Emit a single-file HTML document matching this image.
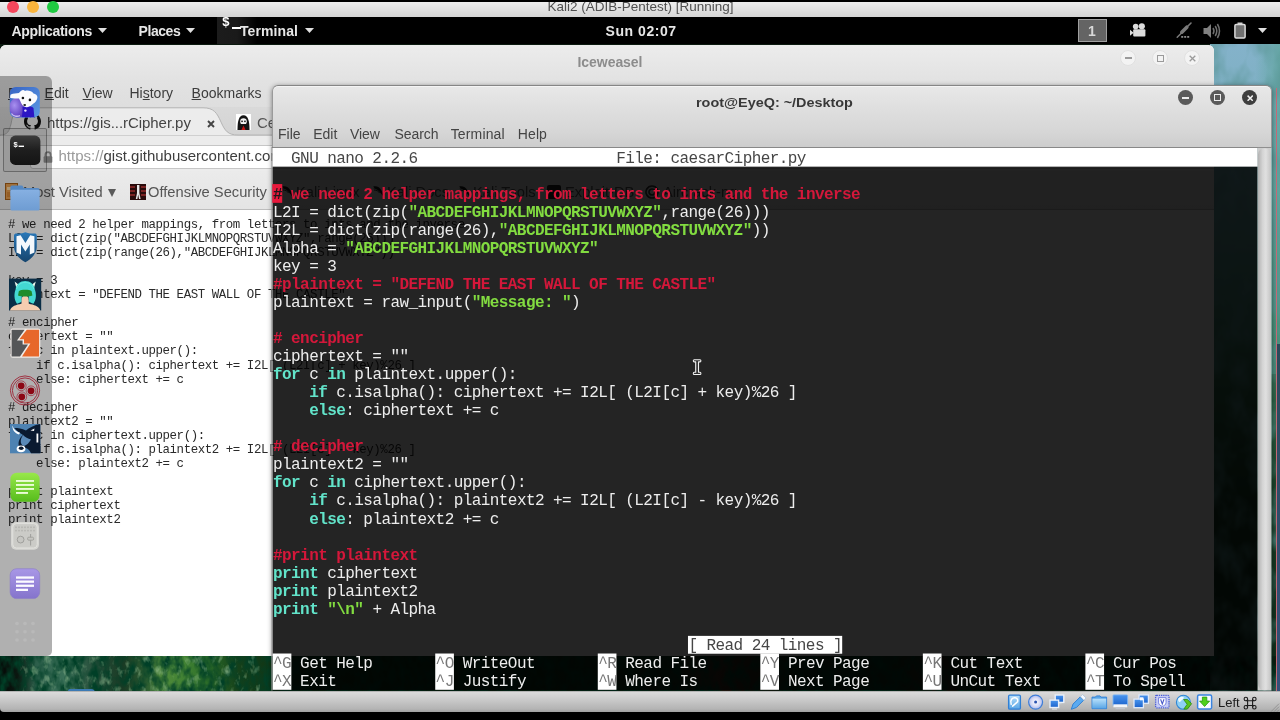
<!DOCTYPE html>
<html><head><meta charset="utf-8">
<style>
*{box-sizing:border-box;margin:0;padding:0}
html,body{width:1280px;height:720px;overflow:hidden;background:#000;font-family:"Liberation Sans",sans-serif}
body>div{will-change:transform}
.abs{position:absolute}
span.t{position:absolute;white-space:nowrap;display:inline-block;transform-origin:0 0}
/* mac */
#mac{left:0;top:1.5px;width:1280px;height:15.5px;background:linear-gradient(#eeeeee,#d3d3d3)}
.tl{position:absolute;width:12px;height:12px;border-radius:6px;top:-1.5px}
/* gnome bar */
#gbar{left:0;top:17px;width:1280px;height:27.3px;background:#000;color:#e6e6e6;font-weight:bold;font-size:14px}
.tri{position:absolute;width:0;height:0;border-left:4.3px solid transparent;border-right:4.3px solid transparent;border-top:4.8px solid #d8d8d8}
/* wallpaper */
#wall{left:0;top:44px;width:1280px;height:648px;background:#0c1a10}
/* iceweasel */
#ice{left:0;top:44.7px;width:1214px;height:611.3px;background:#fff;border-radius:6px 6px 0 0;overflow:hidden}
#ice .title{position:absolute;left:0;top:0;width:100%;height:36px;background:linear-gradient(#ececec,#e2e2e2)}
#ice .menu{position:absolute;left:0;top:36px;width:100%;height:26px;background:linear-gradient(#e2e2e2,#dedede);font-size:14px;color:#3c3c3c}
#ice .tabs{position:absolute;left:0;top:62px;width:100%;height:29px;background:linear-gradient(#d9d9d9,#d3d3d3)}
#ice .nav{position:absolute;left:0;top:90.6px;width:100%;height:35.4px;background:#ececec}
#ice .bm{position:absolute;left:0;top:126px;width:100%;height:39px;background:linear-gradient(#ebebeb,#e4e4e4);border-bottom:1px solid #bdbdbd;font-size:14.7px;color:#555}
#ice pre{position:absolute;left:8px;top:173.2px;font-family:"Liberation Mono",monospace;font-size:12.4px;line-height:14.03px;color:#2a2a2a;letter-spacing:-0.41px}
/* terminal */
#term{left:271px;top:84px;width:1001px;height:607px}
#term .hdr{position:absolute;left:0.5px;top:0.5px;width:1000px;height:63.4px;background:linear-gradient(#e8e8e8,#dedede 40%,#d6d6d6 75%,#cccccc);border-top:1px solid #858585;border-left:1px solid #9a9a9a;border-right:1px solid #9a9a9a;border-radius:6px 6px 0 0;box-shadow:inset 0 1px 0 #f4f4f4}
#term pre{position:absolute;left:2px;top:65.6px;font-family:"Liberation Mono",monospace;font-size:16px;line-height:18.04px;color:#ededed;letter-spacing:-0.57px}
.r{color:#d4173a;font-weight:bold}.g{color:#82dc40;font-weight:bold}.c{color:#62e4ca;font-weight:bold}
.inv{color:#464646}.inv2{color:#777}
.cur{color:#1a1a1a;font-weight:bold}
.wb{position:absolute;width:15px;height:15px;border-radius:8px;top:4.9px}
/* dock */
#dock{left:0;top:76px;width:51.6px;height:580px;background:rgba(0,0,0,0.31);border-radius:0 6px 5px 0;overflow:hidden}
.ic{position:absolute}
/* vbox */
#vbox{left:0;top:691.3px;width:1280px;height:21.4px;background:linear-gradient(#9a9a9a 0,#dadada 1.2px,#cfcfcf 30%,#b4b4b4 85%,#a2a2a2);border-radius:0 0 0 4px;font-size:12.5px;color:#222}
</style></head><body>
<!--MAC-->
<div id="mac" class="abs"><div class="tl" style="left:7px;background:#f5475c"></div><div class="tl" style="left:27px;background:#f9b43c"></div><div class="tl" style="left:47px;background:#1fca41"></div><span class="t" id="mact" style="left:547.5px;top:-3px;font-size:13.5px;line-height:15px;color:#505050">Kali2 (ADIB-Pentest) [Running]</span></div>
<!--GBAR-->
<div id="gbar" class="abs">
<span class="t" id="g1" style="left:11.5px;top:6px;line-height:16px;letter-spacing:-0.3px">Applications</span><svg class="abs" style="left:97.8px;top:11.2px" width="9" height="5" viewBox="0 0 9 5"><path d="M0 0H9L4.5 5Z" fill="#e0e0e0"/></svg>
<span class="t" id="g2" style="left:138.6px;top:6px;line-height:16px;letter-spacing:-0.45px">Places</span><svg class="abs" style="left:186.3px;top:11.2px" width="9" height="5" viewBox="0 0 9 5"><path d="M0 0H9L4.5 5Z" fill="#e0e0e0"/></svg>
<div class="abs" style="left:217px;top:0;width:40px;height:27.3px;background:linear-gradient(90deg,#1c1c1c,#1a1a1a 50%,#000)"></div>
<span class="t" style="left:222.3px;top:-2.7px;font-size:13px;line-height:16px;color:#fff;font-weight:bold">$</span><div class="abs" style="left:232px;top:10.3px;width:8.5px;height:1.8px;background:#fff"></div>
<span class="t" id="g3" style="left:240px;top:6px;line-height:16px;letter-spacing:0.1px">Terminal</span><svg class="abs" style="left:304.5px;top:11.2px" width="9" height="5" viewBox="0 0 9 5"><path d="M0 0H9L4.5 5Z" fill="#e0e0e0"/></svg>
<span class="t" id="g4" style="left:605.6px;top:6px;line-height:16px;letter-spacing:0.55px">Sun 02:07</span>
<div class="abs" style="left:1078px;top:2px;width:28.7px;height:23px;background:#646464;border:1px solid #a0a0a0"></div>
<span class="t" style="left:1088px;top:6px;line-height:16px;color:#d8d8d8">1</span>
<svg class="abs" style="left:1128px;top:5px" width="22" height="18" viewBox="0 0 22 18"><g fill="#dcdcdc"><circle cx="7.7" cy="4.6" r="2.8"/><circle cx="13.8" cy="4.3" r="3.1"/><rect x="5.2" y="7.2" width="12.2" height="7.2" rx="1"/><path d="M5.6 10.8 L2 7.8 L2 13.8Z"/></g></svg>
<svg class="abs" style="left:1174px;top:4px" width="20" height="19" viewBox="0 0 20 19"><g stroke="#7a7a7a" fill="none" stroke-linecap="round"><path d="M17 2 L12.5 6.5" stroke-width="1.6"/><path d="M12.8 6.2 L7.8 11.2" stroke-width="3.6"/><path d="M8 11.5 L3.2 16.2" stroke-width="1.5"/></g><g fill="#8a8a8a"><rect x="7.2" y="15" width="2" height="1.8"/><rect x="10.2" y="15" width="2" height="1.8"/><rect x="13.2" y="15" width="2" height="1.8"/></g></svg>
<svg class="abs" style="left:1202px;top:5px" width="20" height="18" viewBox="0 0 20 18"><path d="M1.5 6 H5 L9 2 V16 L5 12 H1.5Z" fill="#808080"/><g stroke="#707070" fill="none" stroke-width="1.5"><path d="M11 6 Q13 9 11 12"/><path d="M13.2 4 Q16.4 9 13.2 14"/><path d="M15.4 2 Q19.6 9 15.4 16"/></g></svg>
<svg class="abs" style="left:1233px;top:4px" width="14" height="19" viewBox="0 0 14 19"><rect x="4.5" y="1.5" width="5" height="2.5" fill="#d0d0d0"/><rect x="1.9" y="3.6" width="10.2" height="13.4" rx="1.2" fill="#707070" stroke="#dadada" stroke-width="1.5"/></svg>
<svg class="abs" style="left:1258.3px;top:11.2px" width="9" height="5" viewBox="0 0 9 5"><path d="M0 0H9L4.5 5Z" fill="#e0e0e0"/></svg>
</div>
<!--WALL-->
<div id="wall" class="abs">
<div class="abs" style="left:1210px;top:0;width:70px;height:648px;background:linear-gradient(#84b2ca 0,#7cafc0 12%,#66a2a4 26%,#4a8a78 40%,#2c6246 55%,#173e26 70%,#0e2a18 100%)"></div>
<div class="abs" style="left:1255px;top:0;width:25px;height:330px;background:linear-gradient(90deg,rgba(90,170,150,0),rgba(80,160,140,0.55))"></div>
<div class="abs" style="left:0;top:612px;width:1280px;height:36px;background:linear-gradient(90deg,#050a07 0,#0b1710 1.4%,#2c5e4a 2.8%,#3a7058 5%,#274e3a 7.4%,#1a3a24 9.6%,#2a5a30 11.4%,#4f8a3a 12.8%,#3f8032 14.6%,#2c6c28 16.2%,#15401a 18.6%,#0e3214 22%,#0c2a12 40%,#12301a 52%,#3a2a1c 56%,#2a2418 58.5%,#0e2a14 62%,#10301a 70%,#30261a 73%,#0e2614 77%,#0a1e10 100%)"></div>
<svg class="abs" style="left:0;top:612px" width="1280" height="36"><defs><filter id="n1" x="0" y="0" width="100%" height="100%"><feTurbulence type="fractalNoise" baseFrequency="0.11 0.07" numOctaves="3" seed="7"/><feColorMatrix values="0 0 0 0 0  0 0 0 0 0.05  0 0 0 0 0.02  2.4 0 0 0 -0.8"/></filter><filter id="n2" x="0" y="0" width="100%" height="100%"><feTurbulence type="fractalNoise" baseFrequency="0.16 0.1" numOctaves="3" seed="23"/><feColorMatrix values="0 0 0 0 0.4  0 0 0 0 0.62  0 0 0 0 0.36  0 1.5 0 0 -0.82"/></filter></defs><rect width="1280" height="36" filter="url(#n1)"/><rect x="20" width="240" height="36" filter="url(#n2)"/></svg>
<svg class="abs" style="left:1210px;top:0" width="70" height="648"><defs><filter id="n3" x="0" y="0" width="100%" height="100%"><feTurbulence type="fractalNoise" baseFrequency="0.05 0.03" numOctaves="3" seed="11"/><feColorMatrix values="0 0 0 0 0.1  0 0 0 0 0.3  0 0 0 0 0.3  1.6 0 0 0 -0.62"/></filter></defs><rect width="70" height="648" filter="url(#n3)"/></svg>
<div class="abs" style="left:1276px;top:44px;width:1.2px;height:604px;background:#c86a78"></div>
<div class="abs" style="left:1277.4px;top:300px;width:2.6px;height:348px;background:linear-gradient(#2a4a5a,#34507a)"></div>
<div class="abs" style="left:68px;top:645px;width:27px;height:4px;background:#3c7ab4;border-radius:2px 4px 0 0"></div>
</div>
<!--ICE-->
<div id="ice" class="abs">
<div class="title"><span class="t" id="icet" style="left:577.5px;top:9px;font-size:14px;letter-spacing:-0.05px;line-height:16px;color:#8c8c8c;font-weight:bold">Iceweasel</span>
<div class="abs" style="left:1120px;top:5px;width:16px;height:16px;border-radius:8px;background:#f3f3f3;border:1px solid #e0e0e0"></div><div class="abs" style="left:1124.5px;top:12.3px;width:7px;height:1.3px;background:#9a9a9a"></div>
<div class="abs" style="left:1152px;top:5px;width:16px;height:16px;border-radius:8px;background:#f3f3f3;border:1px solid #e0e0e0"></div><div class="abs" style="left:1156.6px;top:9.6px;width:7px;height:7px;border:1.2px solid #9a9a9a"></div>
<div class="abs" style="left:1184px;top:5px;width:16px;height:16px;border-radius:8px;background:#f3f3f3;border:1px solid #e0e0e0"></div><svg class="abs" style="left:1188.5px;top:9.5px" width="7" height="7"><path d="M0.7 0.7L6.3 6.3M6.3 0.7L0.7 6.3" stroke="#9a9a9a" stroke-width="1.3"/></svg>
</div>
<div class="menu"><span class="t" id="m0" style="left:8px;top:4px;line-height:16px"><u>F</u>ile</span><span class="t" id="m1" style="left:44.6px;top:4px;line-height:16px"><u>E</u>dit</span><span class="t" id="m2" style="left:82.6px;top:4px;line-height:16px"><u>V</u>iew</span><span class="t" id="m3" style="left:129.5px;top:4px;line-height:16px">Hi<u>s</u>tory</span><span class="t" id="m4" style="left:191.6px;top:4px;line-height:16px"><u>B</u>ookmarks</span></div>
<div class="tabs">
<svg class="abs" style="left:0;top:0" width="300" height="29" viewBox="0 0 300 29"><path d="M0 29 L0 28 C8 28 9 24 11 17 C13 6 15 0.8 24 0.8 L203 0.8 C214 0.8 217 6 221 15 C225 24 228 28 238 28 L300 28 L300 29Z" fill="#ececec" stroke="#b4b4b4" stroke-width="1"/></svg>
<svg class="abs" style="left:23.5px;top:6px" width="17" height="17" viewBox="0 0 16 16"><path fill="#111" d="M8 0C3.58 0 0 3.58 0 8c0 3.54 2.29 6.53 5.47 7.59.4.07.55-.17.55-.38 0-.19-.01-.82-.01-1.49-2.01.37-2.53-.49-2.69-.94-.09-.23-.48-.94-.82-1.13-.28-.15-.68-.52-.01-.53.63-.01 1.08.58 1.23.82.72 1.21 1.87.87 2.33.66.07-.52.28-.87.51-1.07-1.78-.2-3.64-.89-3.64-3.95 0-.87.31-1.59.82-2.15-.08-.2-.36-1.02.08-2.12 0 0 .67-.21 2.2.82.64-.18 1.32-.27 2-.27s1.36.09 2 .27c1.53-1.04 2.2-.82 2.2-.82.44 1.1.16 1.92.08 2.12.51.56.82 1.27.82 2.15 0 3.07-1.87 3.75-3.65 3.95.29.25.54.73.54 1.48 0 1.07-.01 1.93-.01 2.2 0 .21.15.46.55.38A8.013 8.013 0 0016 8c0-4.42-3.58-8-8-8z"/></svg>
<span class="t" id="tab1" style="left:47px;top:7px;font-size:15px;letter-spacing:-0.05px;line-height:18px;color:#444">https://gis...rCipher.py</span>
<svg class="abs" style="left:206.5px;top:12.5px" width="8" height="8"><path d="M1 1L7 7M7 1L1 7" stroke="#444" stroke-width="1.9"/></svg>
<svg class="abs" style="left:236px;top:7.3px" width="15" height="16" viewBox="0 0 15 16"><rect width="15" height="16" fill="#fff"/><path d="M1.5 16 C1.5 8 2.5 1.2 7.5 1.2 C12.5 1.2 13.5 8 13.5 16Z" fill="#151515"/><ellipse cx="7.5" cy="7.4" rx="3.3" ry="3.2" fill="#f4f4f4"/><rect x="5.3" y="6.6" width="1.5" height="1.5" fill="#111"/><rect x="8.2" y="6.6" width="1.5" height="1.5" fill="#111"/><path d="M5 10 H10 V12 H5Z" fill="#151515"/><path d="M5.4 16 L7.5 11.6 L9.6 16Z" fill="#c41414"/></svg>
<span class="t" style="left:257px;top:7px;font-size:15px;line-height:18px;color:#555">Ce</span>
</div>
<div class="nav">
<div class="abs" style="left:30px;top:9.4px;width:1190px;height:23.6px;background:#fff;border:1px solid #c6c6c6;border-radius:3px"></div>
<svg class="abs" style="left:42.5px;top:15.2px" width="10" height="12" viewBox="0 0 10 12"><path d="M2.4 6 V3.8 A2.6 2.6 0 0 1 7.6 3.8 V6" fill="none" stroke="#9a9a9a" stroke-width="1.7"/><rect x="0.6" y="5.3" width="8.8" height="6.4" rx="1" fill="#9a9a9a"/></svg>
<span class="t" id="url" style="left:58.5px;top:11.8px;font-size:15px;line-height:18px;color:#3e3e3e"><span style="color:#9a9a9a">https://</span>gist.githubusercontent.com/jameslyons/8701593/raw/</span>
</div>
<div class="bm">
<svg class="abs" style="left:5px;top:11.5px" width="13" height="17" viewBox="0 0 13 17"><rect x="0.5" y="0.5" width="12" height="16" fill="#e8a050" stroke="#a86018"/><rect x="2" y="4" width="10" height="3" fill="#f6d8a8"/><rect x="2" y="9" width="10" height="5" fill="#d88838"/></svg>
<span class="t" id="bm1" style="left:23px;top:13.2px;line-height:17px">Most Visited</span><svg class="abs" style="left:108px;top:18.4px" width="8" height="8" viewBox="0 0 8 8"><path d="M0 0H8L4 8Z" fill="#5a5a5a"/></svg>
<svg class="abs" style="left:129.6px;top:13.4px" width="16" height="16" viewBox="0 0 16 16"><rect width="16" height="16" fill="#2a0c0c"/><rect x="0" y="2" width="5" height="2" fill="#7a2222"/><rect x="0" y="6" width="5" height="2" fill="#7a2222"/><rect x="0" y="10" width="5" height="2" fill="#7a2222"/><rect x="11" y="2" width="5" height="2" fill="#7a2222"/><rect x="11" y="6" width="5" height="2" fill="#7a2222"/><rect x="11" y="10" width="5" height="2" fill="#7a2222"/><path d="M7 1 H9.4 V9 L10.6 15 H9 L8.2 10.5 L7.4 15 H5.8 L7 9Z" fill="#e8e8e8"/></svg>
<span class="t" id="bm2" style="left:148px;top:13.2px;line-height:17px">Offensive Security</span>
<svg class="abs" style="left:282.0px;top:13px" width="12" height="16" viewBox="0 0 12 16"><path d="M0 2.5 C3 1.5 7 3 8.5 6.5 C9.5 8.5 10.5 11 11.5 14.5 C10 12.5 9 10.5 7.5 9 C5.5 6.5 3 4.5 0 4 C1.5 3.6 2 3.2 0 2.5Z" fill="#161616"/><path d="M1 6 C3.5 6 5.5 7 6.5 9" stroke="#161616" stroke-width="0.9" fill="none"/></svg><span class="t" style="left:296px;top:13.2px;line-height:17px">Kali Linux</span><svg class="abs" style="left:373.0px;top:13px" width="12" height="16" viewBox="0 0 12 16"><path d="M0 2.5 C3 1.5 7 3 8.5 6.5 C9.5 8.5 10.5 11 11.5 14.5 C10 12.5 9 10.5 7.5 9 C5.5 6.5 3 4.5 0 4 C1.5 3.6 2 3.2 0 2.5Z" fill="#161616"/><path d="M1 6 C3.5 6 5.5 7 6.5 9" stroke="#161616" stroke-width="0.9" fill="none"/></svg><span class="t" style="left:387px;top:13.2px;line-height:17px">Kali Docs</span><svg class="abs" style="left:459.0px;top:13px" width="12" height="16" viewBox="0 0 12 16"><path d="M0 2.5 C3 1.5 7 3 8.5 6.5 C9.5 8.5 10.5 11 11.5 14.5 C10 12.5 9 10.5 7.5 9 C5.5 6.5 3 4.5 0 4 C1.5 3.6 2 3.2 0 2.5Z" fill="#161616"/><path d="M1 6 C3.5 6 5.5 7 6.5 9" stroke="#161616" stroke-width="0.9" fill="none"/></svg><span class="t" style="left:473px;top:13.2px;line-height:17px">Kali Tools</span><div class="abs" style="left:547px;top:13.5px;width:14px;height:14px;background:#1c1c1c;border-radius:2px"></div><span class="t" style="left:565px;top:13.2px;line-height:17px">Exploit-DB</span><svg class="abs" style="left:645px;top:14px" width="14" height="14" viewBox="0 0 14 14"><path d="M7 1 A6 6 0 1 0 7.01 1 M7 4 A3 3 0 1 0 7.01 4" fill="none" stroke="#333" stroke-width="1.6"/></svg><span class="t" style="left:663px;top:13.2px;line-height:17px">Aircrack-ng</span>
</div>
<pre># we need 2 helper mappings, from letters to ints and the inverse
L2I = dict(zip("ABCDEFGHIJKLMNOPQRSTUVWXYZ",range(26)))
I2L = dict(zip(range(26),"ABCDEFGHIJKLMNOPQRSTUVWXYZ"))

key = 3
plaintext = "DEFEND THE EAST WALL OF THE CASTLE"

# encipher
ciphertext = ""
for c in plaintext.upper():
    if c.isalpha(): ciphertext += I2L[ (L2I[c] + key)%26 ]
    else: ciphertext += c

# decipher
plaintext2 = ""
for c in ciphertext.upper():
    if c.isalpha(): plaintext2 += I2L[ (L2I[c] - key)%26 ]
    else: plaintext2 += c

print plaintext
print ciphertext
print plaintext2</pre>
</div>
<!--TERM-->
<div id="term" class="abs">
<div class="abs" style="left:0.5px;top:0.5px;width:1000px;height:606px;border-radius:6px 6px 0 0;box-shadow:0 1px 5px rgba(0,0,0,0.45)"></div>
<div class="hdr"><span class="t" id="tt" style="left:423.2px;top:9.6px;font-size:13px;transform:scaleX(1.108);line-height:16px;font-weight:bold;color:#383838">root@EyeQ: ~/Desktop</span>
<div class="wb" style="left:905.8px;background:#5a5a5a"></div><div class="abs" style="left:909.8px;top:11.6px;width:7px;height:1.6px;background:#ececec"></div>
<div class="wb" style="left:937.8px;background:#5a5a5a"></div><div class="abs" style="left:941.8px;top:8.9px;width:7px;height:7px;border:1.4px solid #ececec"></div>
<div class="wb" style="left:969.9px;background:#3e3e3e"></div><svg class="abs" style="left:974.2px;top:9.2px" width="6.4" height="6.4"><path d="M0.6 0.6L5.8 5.8M5.8 0.6L0.6 5.8" stroke="#f0f0f0" stroke-width="1.5"/></svg>
<span class="t" id="tm0" style="left:5.5px;top:40.3px;font-size:14px;line-height:16px;color:#444;letter-spacing:0px">File</span><span class="t" id="tm1" style="left:40.7px;top:40.3px;font-size:14px;line-height:16px;color:#444;letter-spacing:0px">Edit</span><span class="t" id="tm2" style="left:77.4px;top:40.3px;font-size:14px;line-height:16px;color:#444;letter-spacing:0px">View</span><span class="t" id="tm3" style="left:122px;top:40.3px;font-size:14px;line-height:16px;color:#444;letter-spacing:-0.05px">Search</span><span class="t" id="tm4" style="left:178.2px;top:40.3px;font-size:14px;line-height:16px;color:#444;letter-spacing:0.15px">Terminal</span><span class="t" id="tm5" style="left:245.3px;top:40.3px;font-size:14px;line-height:16px;color:#444;letter-spacing:0.1px">Help</span>
</div>
<svg class="abs" style="left:0;top:0" width="1001" height="607" viewBox="0 0 1001 607">
<defs><linearGradient id="sbg" x1="0" y1="0" x2="1" y2="0"><stop offset="0" stop-color="#b2b2b2"/><stop offset="0.35" stop-color="#d4d4d4"/><stop offset="0.6" stop-color="#e0e0e0"/><stop offset="1" stop-color="#c4c4c4"/></linearGradient></defs>
<rect x="0.50" y="63.20" width="999.90" height="0.80" fill="#777"/><rect x="1.40" y="63.90" width="985.20" height="542.60" fill="rgba(0,0,0,0.86)"/><rect x="0.40" y="63.90" width="1.05" height="542.60" fill="#9a9a9a"/><rect x="986.60" y="63.90" width="13.80" height="542.60" fill="#cdcdcd"/><rect x="987.00" y="64.20" width="13.00" height="542.10" fill="url(#sbg)" rx="6.5"/><rect x="1.50" y="63.90" width="985.10" height="18.75" fill="#fff"/><rect x="1.30" y="100.08" width="9.90" height="18.75" fill="#e8183c"/><rect x="416.98" y="551.88" width="154.21" height="17.85" fill="#fff"/><rect x="1.70" y="569.52" width="18.66" height="36.28" fill="#fff"/><rect x="164.24" y="569.52" width="18.66" height="36.28" fill="#fff"/><rect x="326.78" y="569.52" width="18.66" height="36.28" fill="#fff"/><rect x="489.32" y="569.52" width="18.66" height="36.28" fill="#fff"/><rect x="651.86" y="569.52" width="18.66" height="36.28" fill="#fff"/><rect x="814.40" y="569.52" width="18.66" height="36.28" fill="#fff"/>
</svg>
<pre><span class="inv">  GNU nano 2.2.6                      File: caesarCipher.py                                                  </span>

<span class="cur">#</span><span class="r"> we need 2 helper mappings, from letters to ints and the inverse</span>
L2I = dict(zip(<span class="g">"ABCDEFGHIJKLMNOPQRSTUVWXYZ"</span>,range(26)))
I2L = dict(zip(range(26),<span class="g">"ABCDEFGHIJKLMNOPQRSTUVWXYZ"</span>))
Alpha = <span class="g">"ABCDEFGHIJKLMNOPQRSTUVWXYZ"</span>
key = 3
<span class="r">#plaintext = "DEFEND THE EAST WALL OF THE CASTLE"</span>
plaintext = raw_input(<span class="g">"Message: "</span>)

<span class="r"># encipher</span>
ciphertext = ""
<span class="c">for</span> c <span class="c">in</span> plaintext.upper():
    <span class="c">if</span> c.isalpha(): ciphertext += I2L[ (L2I[c] + key)%26 ]
    <span class="c">else</span>: ciphertext += c

<span class="r"># decipher</span>
plaintext2 = ""
<span class="c">for</span> c <span class="c">in</span> ciphertext.upper():
    <span class="c">if</span> c.isalpha(): plaintext2 += I2L[ (L2I[c] - key)%26 ]
    <span class="c">else</span>: plaintext2 += c

<span class="r">#print plaintext</span>
<span class="c">print</span> ciphertext
<span class="c">print</span> plaintext2
<span class="c">print</span> <span class="g">"\n"</span> + Alpha

                                              <span class="inv">[ Read 24 lines ]</span>
<span class="inv2">^G</span> Get Help       <span class="inv2">^O</span> WriteOut       <span class="inv2">^R</span> Read File      <span class="inv2">^Y</span> Prev Page      <span class="inv2">^K</span> Cut Text       <span class="inv2">^C</span> Cur Pos
<span class="inv2">^X</span> Exit           <span class="inv2">^J</span> Justify        <span class="inv2">^W</span> Where Is       <span class="inv2">^V</span> Next Page      <span class="inv2">^U</span> UnCut Text     <span class="inv2">^T</span> To Spell</pre>
</div>
<!--CURSOR-->
<svg class="abs" style="left:690px;top:356px" width="14" height="22" viewBox="690 356 14 22"><path d="M694.2 359.7 H700 Q700.9 359.7 700.9 360.8 Q700.9 361.9 700 361.9 H698.5 V372.3 H700 Q700.9 372.3 700.9 373.4 Q700.9 374.5 700 374.5 H694.2 Q693.3 374.5 693.3 373.4 Q693.3 372.3 694.2 372.3 H695.7 V361.9 H694.2 Q693.3 361.9 693.3 360.8 Q693.3 359.7 694.2 359.7Z" fill="#303030" stroke="#f2f2f2" stroke-width="1.1" stroke-linejoin="round"/></svg>
<!--DOCK-->
<div id="dock" class="abs">
<div class="abs" style="left:3px;top:52.3px;width:43.6px;height:44px;background:rgba(0,0,0,0.05);border:1px solid rgba(30,30,30,0.4);border-radius:2px"></div>
<svg class="abs" style="left:0;top:0" width="52" height="580" viewBox="0 0 52 580">
<defs>
<linearGradient id="gi" x1="0" y1="0" x2="1" y2="1"><stop offset="0" stop-color="#3864c4"/><stop offset="1" stop-color="#5b9ae4"/></linearGradient>
<radialGradient id="gp" cx="0.35" cy="0.35" r="0.8"><stop offset="0" stop-color="#a890f0"/><stop offset="1" stop-color="#4a28b0"/></radialGradient>
<linearGradient id="gt" x1="0" y1="0" x2="0" y2="1"><stop offset="0" stop-color="#3c3c3c"/><stop offset="0.5" stop-color="#1e1e1e"/><stop offset="1" stop-color="#141414"/></linearGradient>
<linearGradient id="gf" x1="0" y1="0" x2="0" y2="1"><stop offset="0" stop-color="#86b0e2"/><stop offset="1" stop-color="#6e9cd2"/></linearGradient>
<linearGradient id="gm" x1="0" y1="0" x2="0" y2="1"><stop offset="0" stop-color="#2a78b8"/><stop offset="1" stop-color="#16456e"/></linearGradient>
<linearGradient id="gg" x1="0" y1="0" x2="0" y2="1"><stop offset="0" stop-color="#98e84a"/><stop offset="1" stop-color="#56bc1c"/></linearGradient>
<linearGradient id="gv" x1="0" y1="0" x2="0" y2="1"><stop offset="0" stop-color="#a897e6"/><stop offset="1" stop-color="#8574cc"/></linearGradient>
</defs>
<!-- iceweasel -->
<g>
<clipPath id="icl"><rect x="9.8" y="11" width="30" height="30.5" rx="6"/></clipPath>
<rect x="9.8" y="11" width="30" height="30.5" rx="6" fill="url(#gi)"/>
<g clip-path="url(#icl)">
<ellipse cx="17.2" cy="32" rx="7.8" ry="10" fill="url(#gp)" transform="rotate(-8 17.2 32)"/>
<path d="M11.5 37.5 C13 40 17 41 20 39.6" stroke="#e4dcff" stroke-width="1.3" fill="none" opacity="0.8"/>
<path d="M22.5 31 C25 29.5 31 29.6 33.5 32 L34.4 41.6 L21.5 41.6 C22.5 38.5 22.8 34 22.5 31Z" fill="#2c16c4"/>
<path d="M21.2 14.8 C22.5 13.6 24.2 14 25 15 C28 14 31.5 15 33.5 17.4 C35.5 17.6 37.6 19.4 37.4 21.4 C37.2 24 35.5 26 33.5 27.6 C31.5 29.4 29.5 31 27 31.2 C24.5 31.4 22.6 30 21.4 27.6 C20.4 25.6 19.8 24 19 22.6 C16 22.4 12.5 22.6 10.4 22 C10 20.8 10.2 19.4 10.8 18.4 C13.5 17.4 16.5 17.2 19 17 C19.6 16 20.4 15.4 21.2 14.8Z" fill="#fbfbfd"/>
<circle cx="22.9" cy="22" r="1.3" fill="#111"/><circle cx="29.9" cy="23.9" r="1.3" fill="#111"/><ellipse cx="24.7" cy="29" rx="1.4" ry="1" fill="#222"/>
<circle cx="25.4" cy="34.6" r="1.2" fill="#e8e0ff"/>
</g>
</g>
<!-- terminal -->
<rect x="10" y="59.6" width="30.4" height="29.3" rx="5.5" fill="url(#gt)"/>
<text x="13.6" y="70.6" font-family="Liberation Sans" font-weight="bold" font-size="7.5" fill="#fff">$</text><rect x="18.6" y="69.6" width="5.4" height="1.4" fill="#fff"/>
<!-- folder -->
<path d="M10.4 111 Q10.4 109.4 12 109.4 L21.5 109.4 Q22.6 109.4 23 110.4 L23.6 112 L38 112 Q39.6 112 39.6 113.6 L39.6 120 L10.4 120Z" fill="#5588c2"/>
<rect x="10.4" y="113.8" width="29.2" height="20.8" rx="1.6" fill="url(#gf)"/>
<!-- metasploit -->
<path d="M14 159.6 C14 158 15 157.4 16.4 157.4 C20 157.6 23 157.2 25.4 156.2 C27.8 157.2 30.8 157.6 34.4 157.4 C35.8 157.4 36.8 158 36.8 159.6 L36.8 171 C36.6 177.6 31.4 183 25.4 186.3 C19.4 183 14.2 177.6 14 171Z" fill="url(#gm)"/>
<path d="M16.5 160.2 L20.6 159.2 L25.4 167 L30.2 159.2 L34.4 160.2 L34.4 176.4 L29.8 178.4 L29.8 168.6 L25.4 175.4 L21 168.6 L21 178.4 L16.5 176.4Z" fill="#f4f8fc"/>
<!-- armitage -->
<rect x="9" y="202.6" width="32.2" height="31.9" fill="#0b2e46"/>
<path d="M10 234.5 C11 230.2 16.5 228.8 21.4 227.8 L21.8 224 L28.4 224 L28.8 227.8 C33.6 228.8 39.2 230.2 40.4 234.5Z" fill="#f5cdb0"/>
<path d="M14.6 205.6 L19.6 209.6 L16.4 212Z M35.8 205.6 L30.8 209.6 L34 212Z" fill="#eaf6ea"/>
<path d="M25.2 205 C30 205 34.4 208 34.8 213.6 C36.4 217.6 36.6 223.6 33.4 227.8 C31.6 227.2 30 226.6 28.8 225.6 L28.6 219 L21.8 219 L21.6 225.6 C20.4 226.6 18.8 227.2 17 227.8 C13.8 223.6 14 217.6 15.6 213.6 C16 208 20.4 205 25.2 205Z" fill="#43d8d2"/>
<path d="M16.6 213 C18 208 22 206.4 25.2 206.4 C28.4 206.4 32.4 208 33.8 213" fill="none" stroke="#7ff0e8" stroke-width="1" opacity="0.6"/>
<ellipse cx="25.1" cy="224" rx="3.5" ry="4.6" fill="#f5cdb0"/>
<path d="M18.8 215.2 C21 213.4 29.4 213.4 31.6 215.2 L32.4 219.4 C29 220.8 21.4 220.8 18 219.4Z" fill="#1e8c2c"/>
<!-- burp -->
<rect x="10.4" y="252.6" width="29.9" height="29.2" rx="2.4" fill="#f0ece8"/>
<path d="M11.6 253.8 L24.6 253.8 L17 264.4 L22.6 264.4 L22.6 268.6 L28 268.6 L20 280.6 L11.6 280.6Z" fill="#555658"/>
<path d="M39.1 253.8 L26.8 253.8 L19.4 263.2 L24 263.2 L24 267.4 L30.4 267.4 L22 280.6 L39.1 280.6Z" fill="#e7672a"/>
<!-- maltego -->
<g fill="none" stroke="#9c2436">
<circle cx="25" cy="314.5" r="14.6" stroke-width="0.9"/><circle cx="25" cy="314.5" r="12.6" stroke-width="0.9"/>
<circle cx="21.2" cy="309.8" r="4.9" stroke-width="0.7"/><circle cx="31" cy="314.8" r="4.9" stroke-width="0.7"/><circle cx="21.8" cy="320.8" r="4.9" stroke-width="0.7"/>
</g>
<circle cx="21.2" cy="309.8" r="3.4" fill="#8c0614"/><circle cx="31" cy="314.8" r="3.4" fill="#8c0614"/><circle cx="21.8" cy="320.8" r="3.4" fill="#8c0614"/>
<!-- beef -->
<rect x="10" y="348" width="30.3" height="29.3" fill="#4d82b2"/>
<path d="M40.3 348 L40.3 377.3 L31 377.3 C29 372 24 370 20 372.5 C17 368 19 362 23 359 C20 357 17 355.5 14.5 352 C18 352 22 352.5 26 354.5 C29 352 34 349 40.3 348Z" fill="#0a1a30"/>
<path d="M23 359 C25 361 28 363 31 363.5 C29 367 27 369 24 370 C21 369 19 365 23 359Z" fill="#5a8ab8"/>
<path d="M12.5 349.6 C13.5 353.5 16.5 355.8 20 356.8 L19 358.6 C15 357.5 12 354 12.5 349.6Z" fill="#fff"/>
<path d="M36.5 357.5 L38.3 357.5 L38.3 366.5 L36.5 366.5Z" fill="#fff"/>
<path d="M30.5 354.5 L34.5 352.5 L34 355Z" fill="#fff"/>
<ellipse cx="21" cy="372.8" rx="4.4" ry="3.4" fill="#fff"/><ellipse cx="21.2" cy="372.2" rx="2.4" ry="1.8" fill="#0a1a30"/>
<!-- green note -->
<rect x="10.4" y="396.7" width="29.2" height="29.1" rx="6.5" fill="url(#gg)"/>
<g fill="#eafcd6"><rect x="16" y="404" width="18" height="1.9"/><rect x="16" y="408" width="18" height="1.9"/><rect x="16" y="412" width="18" height="1.9"/><rect x="16" y="416" width="12" height="1.9"/></g>
<!-- tweak -->
<rect x="11" y="446" width="28" height="27.8" rx="5" fill="#d6d6d2"/>
<rect x="12.8" y="447.6" width="24.4" height="24.4" rx="3.6" fill="#cbcbc7" stroke="#e2e2de" stroke-width="1"/>
<g fill="#a8a8a4"><rect x="15.5" y="450.5" width="1" height="1.6"/><rect x="18.5" y="450.5" width="1" height="1.6"/><rect x="21.5" y="450.5" width="1" height="1.6"/><rect x="24.5" y="450.5" width="1" height="1.6"/><rect x="27.5" y="450.5" width="1" height="1.6"/><rect x="30.5" y="450.5" width="1" height="1.6"/><rect x="33.5" y="450.5" width="1" height="1.6"/>
<rect x="15.5" y="453.8" width="1" height="1.6"/><rect x="18.5" y="453.8" width="1" height="1.6"/><rect x="21.5" y="453.8" width="1" height="1.6"/><rect x="24.5" y="453.8" width="1" height="1.6"/><rect x="27.5" y="453.8" width="1" height="1.6"/><rect x="30.5" y="453.8" width="1" height="1.6"/><rect x="33.5" y="453.8" width="1" height="1.6"/></g>
<circle cx="20.6" cy="463.6" r="3.4" fill="#c6c6c2" stroke="#9a9a96" stroke-width="0.9"/>
<path d="M30.6 458 V469.5" stroke="#9a9a96" stroke-width="0.9"/><rect x="27.6" y="461.2" width="6" height="3" rx="1.2" fill="#c6c6c2" stroke="#9a9a96" stroke-width="0.8"/>
<!-- purple note -->
<rect x="10.1" y="492.7" width="29.6" height="29.9" rx="6.5" fill="url(#gv)" stroke="#8a7ac8" stroke-width="0.6"/>
<g fill="#fbfaff"><rect x="16" y="500.4" width="18" height="2.3"/><rect x="16" y="504.5" width="18" height="2.3"/><rect x="16" y="508.6" width="18" height="2.3"/><rect x="16" y="512.7" width="12" height="2.3"/></g>
<!-- dots -->
<g fill="#b9b9b9"><circle cx="17" cy="547.5" r="1.8"/><circle cx="25" cy="547.5" r="1.8"/><circle cx="33" cy="547.5" r="1.8"/><circle cx="17" cy="555.7" r="1.8"/><circle cx="25" cy="555.7" r="1.8"/><circle cx="33" cy="555.7" r="1.8"/><circle cx="17" cy="564" r="1.8"/><circle cx="25" cy="564" r="1.8"/><circle cx="33" cy="564" r="1.8"/></g>
</svg>
</div>
<!--VBOX-->
<div id="vbox" class="abs">
<svg class="abs" style="left:1000px;top:0" width="280" height="22" viewBox="1000 691.3 280 22">
<defs><linearGradient id="vb1" x1="0" y1="0" x2="0" y2="1"><stop offset="0" stop-color="#b8e0fa"/><stop offset="1" stop-color="#5aa6e6"/></linearGradient>
<linearGradient id="vb2" x1="0" y1="0" x2="0" y2="1"><stop offset="0" stop-color="#4a96ee"/><stop offset="1" stop-color="#1a62cc"/></linearGradient>
<radialGradient id="vb3"><stop offset="0" stop-color="#fff"/><stop offset="0.6" stop-color="#d8dcf6"/><stop offset="1" stop-color="#a8b8ec"/></radialGradient></defs>
<!-- hdd -->
<rect x="1008.6" y="695.4" width="11.8" height="14" rx="1.2" fill="url(#vb1)" stroke="#2f7fd6" stroke-width="1.3"/>
<path d="M1011.2 704.6 C1009.6 700.4 1012.4 697.6 1015.2 698 C1018 698.4 1018.6 701.6 1016.6 703 L1012.6 706.4" fill="none" stroke="#fff" stroke-width="1.5" stroke-linecap="round"/>
<!-- cd -->
<circle cx="1035.6" cy="702.4" r="7" fill="url(#vb3)" stroke="#3f7ed8" stroke-width="1.2"/><circle cx="1035.6" cy="702.4" r="1.5" fill="#2a52b0"/>
<!-- net -->
<rect x="1055.2" y="695.3" width="8.6" height="7.4" fill="url(#vb2)" stroke="#e8f0fa" stroke-width="1.4"/><rect x="1057.6" y="703.2" width="4" height="1.3" fill="#c8d0d8"/>
<rect x="1050" y="700.4" width="8.6" height="7.4" fill="url(#vb2)" stroke="#e8f0fa" stroke-width="1.4"/><rect x="1052" y="708.6" width="5" height="1.4" fill="#d8dce0"/>
<!-- usb -->
<path d="M1071.3 709.6 L1073 704.4 L1080.2 697.2 L1083.6 700.6 L1076.4 707.8Z" fill="#5aaaf0" stroke="#2a7ad0" stroke-width="0.9" stroke-linejoin="round"/>
<path d="M1080.4 697 L1082.6 694.9 L1086 698.3 L1083.8 700.5Z" fill="#f4f8fc" stroke="#9ab8d8" stroke-width="0.6"/>
<!-- folder -->
<path d="M1092 697.4 L1092 709 L1106.6 709 L1106.6 697.4 L1101 697.4 L1100 696.2 L1096.4 696.2 L1095.4 697.4Z" fill="#5aa6e6" stroke="#2f7fd6" stroke-width="0.9"/>
<rect x="1092.4" y="699" width="13.8" height="9.6" fill="url(#vb1)"/>
<!-- display -->
<rect x="1113" y="695.2" width="14.6" height="11" rx="0.8" fill="url(#vb2)" stroke="#7ab4f4" stroke-width="0.9"/>
<rect x="1113.4" y="704.6" width="13.8" height="3" fill="#f2f4f8"/><rect x="1115.6" y="708" width="9.4" height="1.5" fill="#c0c4cc"/>
<!-- shared squares -->
<rect x="1139" y="695.2" width="9.4" height="8.4" fill="url(#vb2)" stroke="#dfeafa" stroke-width="1.3"/>
<rect x="1134" y="699.4" width="9.4" height="8.6" fill="url(#vb2)" stroke="#dfeafa" stroke-width="1.3"/>
<rect x="1140" y="697.6" width="3.4" height="3" fill="#f8fbff"/>
<!-- chip -->
<rect x="1155.6" y="695.6" width="13.4" height="12.6" rx="1" fill="#c6ccf4" stroke="#4a5ed8" stroke-width="1.3" stroke-dasharray="1.3 0.9"/>
<path d="M1158.6 698 L1166 698 L1166 703 C1166 705 1163.8 706.4 1162.3 706.6 C1160.8 706.4 1158.6 705 1158.6 703Z" fill="#fff" stroke="#5a6ad8" stroke-width="0.8"/><path d="M1160.6 699.6 L1162.3 704.2 L1164 699.6" fill="none" stroke="#4a5ac8" stroke-width="1.1"/>
<!-- globe -->
<circle cx="1183.4" cy="702.6" r="7" fill="#8ed0f4" stroke="#2f86d6" stroke-width="1.1"/>
<path d="M1178.4 698.6 C1180 696.6 1183 696.4 1184 698 C1183 700 1181 700.4 1180 702.4 C1178.6 702.6 1177.6 700.6 1178.4 698.6Z" fill="#f0fafe"/>
<path d="M1183.6 699.8 L1187.4 699.8 L1191.6 704 L1187.4 709.4 L1183.8 709.4 L1187.2 704.6Z" fill="#58c41e" stroke="#2c8a10" stroke-width="0.8" stroke-linejoin="round"/>
<!-- arrow box -->
<rect x="1197.6" y="695.4" width="14" height="13.8" rx="1.4" fill="#f8fbff" stroke="#3a84e0" stroke-width="1.5"/>
<path d="M1202.4 697.4 L1206.8 697.4 L1206.8 701.4 L1209.6 701.4 L1204.6 706.8 L1199.6 701.4 L1202.4 701.4Z" fill="#4ed01c" stroke="#2a9a10" stroke-width="0.8" stroke-linejoin="round"/>
<g fill="none" stroke="#1c1c1c" stroke-width="1.1"><circle cx="1245.85" cy="699.25" r="1.75"/><circle cx="1254.35" cy="699.25" r="1.75"/><circle cx="1245.85" cy="707.55" r="1.75"/><circle cx="1254.35" cy="707.55" r="1.75"/><path d="M1245.85 701.00 H1254.35 M1245.85 705.80 H1254.35 M1247.60 699.25 V707.55 M1252.60 699.25 V707.55"/></g>
<!-- grip -->
<path d="M1271 712 L1279 704 M1274 712 L1279 707 M1277 712 L1279 710" stroke="#8a8a8a" stroke-width="0.8"/>
</svg>
<span class="t" id="vb" style="left:1218px;top:4.4px;line-height:16px;font-size:13px;color:#1c1c1c">Left</span></div>
</body></html>
